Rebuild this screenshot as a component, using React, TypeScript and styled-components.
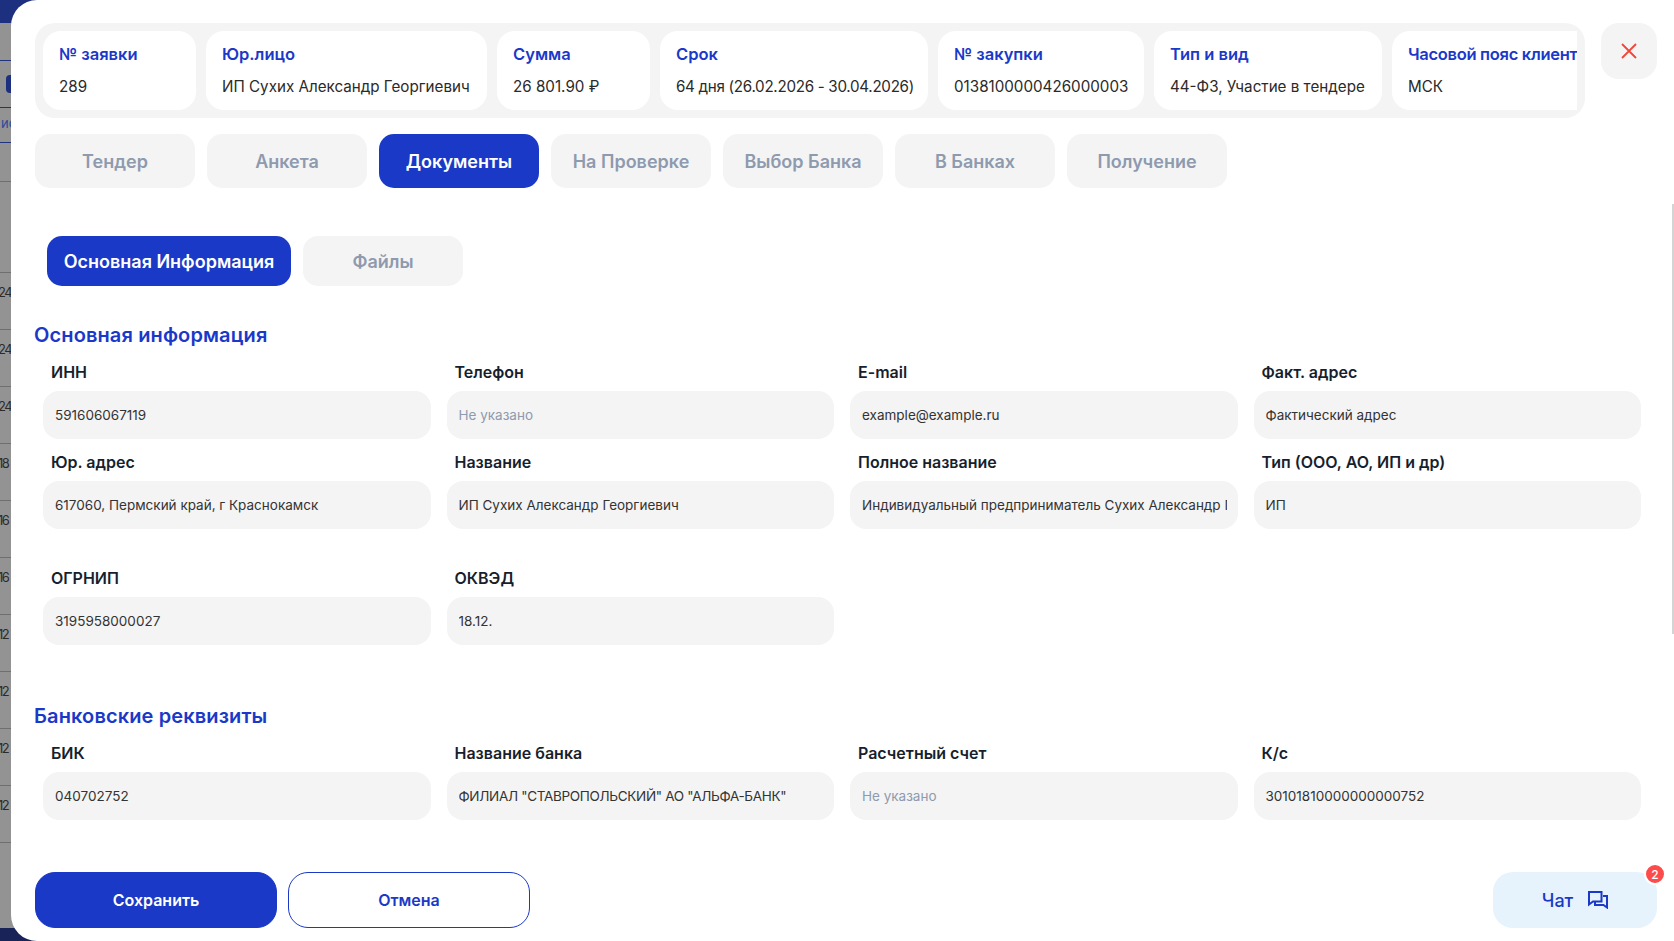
import React from "react";
import styled, { createGlobalStyle } from "styled-components";

const Global = createGlobalStyle`
  html, body { margin: 0; padding: 0; height: 100%; overflow: hidden; }
  body { font-family: Inter, "Noto Sans", "Liberation Sans", sans-serif; background: #8a8a8a; }
  * { box-sizing: border-box; }
`;

const Backdrop = styled.div`
  height: 941px;
  overflow: hidden;
  display: flex;
  flex-direction: column;
  background: linear-gradient(90deg, #939393, #7c7c7c);
  color: #222;
`;
const BackTop = styled.div`
  height: 23px;
  flex: none;
  background: #1d2f7f;
`;
const BackHead = styled.div`
  height: 38px;
  flex: none;
  border-bottom: 1px solid #20337f;
`;
const BackNav = styled.div`
  height: 47px;
  flex: none;
  border-bottom: 1px solid #20337f;
  display: flex;
  align-items: center;
`;
const BackMark = styled.span`
  display: block;
  width: 11px;
  height: 18px;
  margin-left: 6px;
  border-radius: 4px 0 0 4px;
  background: #1d2f7f;
`;
const BackSub = styled.div`
  height: 35px;
  flex: none;
  border-bottom: 1px solid #20337f;
  padding-left: 1px;
  font-size: 13px;
  line-height: 30px;
  color: #2b4a9c;
  white-space: nowrap;
`;
const BackGap = styled.div<{ $h: number }>`
  height: ${(p) => p.$h}px;
  flex: none;
  border-bottom: 1px solid #6f6f6f;
`;
const BackRow = styled.div`
  height: 57px;
  flex: none;
  border-bottom: 1px solid #6f6f6f;
  padding-bottom: 19px;
  display: flex;
  align-items: center;
`;
const BackNum = styled.span`
  margin-left: -2px;
  font-size: 13px;
  letter-spacing: -1.5px;
  color: #2b2b2b;
`;
const BackBottom = styled.div`
  flex: 1;
  background: #1a2358;
  margin-top: 85px;
`;

const Modal = styled.div`
  position: fixed;
  top: 0;
  left: 11px;
  right: 0;
  bottom: 0;
  background: #fff;
  border-radius: 26px 0 0 26px;
  padding: 23px 17px 13px 24px;
  display: flex;
  flex-direction: column;
  overflow: hidden;
`;
const ScrollThumb = styled.div`
  position: absolute;
  top: 204px;
  right: 0;
  width: 2px;
  height: 430px;
  background: #d4d4d4;
`;

const Header = styled.div`
  display: flex;
  gap: 16px;
  flex: none;
`;
const InfoStrip = styled.div`
  flex: 1;
  min-width: 0;
  height: 95px;
  padding: 8px;
  border-radius: 20px;
  background: #f4f4f4;
`;
const InfoScroll = styled.div`
  display: flex;
  gap: 10px;
  height: 79px;
  overflow: hidden;
`;
const InfoCard = styled.div<{ $w: number }>`
  flex: none;
  width: ${(p) => p.$w}px;
  background: #fff;
  border-radius: 18px;
  padding: 14px 16px;
  display: flex;
  flex-direction: column;
  gap: 14px;
`;
const InfoLabel = styled.div<{ $tight?: boolean }>`
  font-size: 16.5px;
  line-height: 18px;
  font-weight: 600;
  color: #1a39c9;
  white-space: nowrap;
  letter-spacing: ${(p) => (p.$tight ? "-0.3px" : "0")};
`;
const InfoValue = styled.div<{ $tight?: boolean }>`
  font-size: 15.2px;
  line-height: 20px;
  font-weight: 400;
  color: #2a2a2a;
  white-space: nowrap;
  letter-spacing: ${(p) => (p.$tight ? "-0.3px" : "0")};
`;
const CloseButton = styled.button`
  flex: none;
  width: 56px;
  height: 56px;
  border: 0;
  border-radius: 18px;
  background: #f4f4f4;
  display: flex;
  align-items: center;
  justify-content: center;
  padding: 0;
`;

const Tabs = styled.div<{ $mt: number; $ml?: number }>`
  display: flex;
  gap: 12px;
  flex: none;
  margin-top: ${(p) => p.$mt}px;
  margin-left: ${(p) => p.$ml ?? 0}px;
`;
const Tab = styled.button<{ $active?: boolean; $h: number; $w?: number }>`
  width: ${(p) => p.$w ?? 160}px;
  height: ${(p) => p.$h}px;
  padding: 0;
  border: 0;
  border-radius: 15px;
  background: ${(p) => (p.$active ? "#1a39c7" : "#f4f4f4")};
  color: ${(p) => (p.$active ? "#fff" : "#8e9aae")};
  font-family: inherit;
  font-size: 18px;
  font-weight: 600;
  white-space: nowrap;
`;

const SectionTitle = styled.h2<{ $mt: number }>`
  margin: ${(p) => p.$mt}px 0 14px -1px;
  height: 26px;
  font-size: 20px;
  line-height: 26px;
  font-weight: 600;
  letter-spacing: 0.12px;
  color: #1a39c9;
`;
const FieldRow = styled.div<{ $mt?: number }>`
  display: grid;
  grid-template-columns: repeat(4, 1fr);
  gap: 16px;
  margin: ${(p) => p.$mt ?? 0}px 16px 0 8px;
  flex: none;
`;
const Field = styled.label`
  display: flex;
  flex-direction: column;
  gap: 9px;
  min-width: 0;
`;
const FieldLabel = styled.span`
  padding-left: 8px;
  font-size: 16px;
  line-height: 20px;
  font-weight: 600;
  color: #171f2e;
  white-space: nowrap;
`;
const Input = styled.input<{ $tight?: boolean }>`
  width: 100%;
  height: 48px;
  border: 0;
  outline: 0;
  border-radius: 16px;
  background: #f4f4f4;
  padding: 0 11px 0 12px;
  font-family: inherit;
  font-size: 13.5px;
  letter-spacing: ${(p) => (p.$tight ? "-0.31px" : "0")};
  color: #333;
  &::placeholder { color: #8e9aae; opacity: 1; }
`;

const Footer = styled.div`
  display: flex;
  align-items: center;
  margin-top: 52px;
  gap: 11px;
  flex: none;
`;
const ActionButton = styled.button<{ $primary?: boolean }>`
  width: 242px;
  height: 56px;
  border-radius: 20px;
  border: 1px solid #1a39c7;
  background: ${(p) => (p.$primary ? "#1a39c7" : "#fff")};
  color: ${(p) => (p.$primary ? "#fff" : "#1a39c7")};
  font-family: inherit;
  font-size: 16px;
  font-weight: 600;
`;
const ChatButton = styled.button`
  position: relative;
  margin-left: auto;
  width: 164px;
  height: 56px;
  border: 0;
  border-radius: 20px;
  background: #e6f3fc;
  color: #1a39c7;
  font-family: inherit;
  font-size: 18px;
  font-weight: 500;
  display: flex;
  align-items: center;
  justify-content: center;
  gap: 15px;
`;
const Badge = styled.span`
  position: absolute;
  top: -9px;
  right: -9px;
  width: 22px;
  height: 22px;
  border-radius: 50%;
  border: 2px solid #fff;
  background: #fd4b4b;
  color: #fff;
  font-size: 12px;
  font-weight: 500;
  display: flex;
  align-items: center;
  justify-content: center;
`;

const info: [string, string, number][] = [
  ["№ заявки", "289", 153],
  ["Юр.лицо", "ИП Сухих Александр Георгиевич", 281],
  ["Сумма", "26 801.90 ₽", 153],
  ["Срок", "64 дня (26.02.2026 - 30.04.2026)", 268],
  ["№ закупки", "0138100000426000003", 206],
  ["Тип и вид", "44-ФЗ, Участие в тендере", 228],
  ["Часовой пояс клиента", "МСК", 240],
];
const tabs = ["Тендер", "Анкета", "Документы", "На Проверке", "Выбор Банка", "В Банках", "Получение"];
const nums = ["24", "24", "24", "18", "16", "16", "12", "12", "12", "12"];

type F = [string, string];
const rowA: F[] = [["ИНН", "591606067119"], ["Телефон", ""], ["E-mail", "example@example.ru"], ["Факт. адрес", "Фактический адрес"]];
const rowB: F[] = [
  ["Юр. адрес", "617060, Пермский край, г Краснокамск"],
  ["Название", "ИП Сухих Александр Георгиевич"],
  ["Полное название", "Индивидуальный предприниматель Сухих Александр Георгиевич"],
  ["Тип (ООО, АО, ИП и др)", "ИП"],
];
const rowC: F[] = [["ОГРНИП", "3195958000027"], ["ОКВЭД", "18.12."]];
const rowD: F[] = [
  ["БИК", "040702752"],
  ["Название банка", 'ФИЛИАЛ "СТАВРОПОЛЬСКИЙ" АО "АЛЬФА-БАНК"'],
  ["Расчетный счет", ""],
  ["К/с", "30101810000000000752"],
];

const Fields = ({ items, mt }: { items: F[]; mt?: number }) => (
  <FieldRow $mt={mt}>
    {items.map(([l, v]) => (
      <Field key={l}>
        <FieldLabel>{l}</FieldLabel>
        <Input readOnly value={v} placeholder="Не указано" $tight={l === "Название банка"} />
      </Field>
    ))}
  </FieldRow>
);

export default function App() {
  return (
    <>
      <Global />
      <Backdrop>
        <BackTop />
        <BackHead />
        <BackNav><BackMark /></BackNav>
        <BackSub>ис</BackSub>
        <BackGap $h={39} />
        <BackGap $h={91} />
        {nums.map((n, i) => (
          <BackRow key={i}><BackNum>{n}</BackNum></BackRow>
        ))}
        <BackBottom />
      </Backdrop>
      <Modal>
        <ScrollThumb />
        <Header>
          <InfoStrip>
            <InfoScroll>
              {info.map(([l, v, w]) => (
                <InfoCard key={l} $w={w}>
                  <InfoLabel $tight={l.startsWith("Часовой")}>{l}</InfoLabel>
                  <InfoValue $tight={l === "Срок"}>{v}</InfoValue>
                </InfoCard>
              ))}
            </InfoScroll>
          </InfoStrip>
          <CloseButton aria-label="Закрыть">
            <svg width="16" height="16" viewBox="0 0 16 16" fill="none">
              <path d="M1 1l14 14M15 1L1 15" stroke="#f2463a" strokeWidth="1.8" />
            </svg>
          </CloseButton>
        </Header>
        <Tabs $mt={16}>
          {tabs.map((t) => (
            <Tab key={t} $h={54} $active={t === "Документы"}>{t}</Tab>
          ))}
        </Tabs>
        <Tabs $mt={48} $ml={12}>
          <Tab $h={50} $w={244} $active>Основная Информация</Tab>
          <Tab $h={50}>Файлы</Tab>
        </Tabs>
        <SectionTitle $mt={36}>Основная информация</SectionTitle>
        <Fields items={rowA} />
        <Fields items={rowB} mt={13} />
        <Fields items={rowC} mt={39} />
        <SectionTitle $mt={58}>Банковские реквизиты</SectionTitle>
        <Fields items={rowD} />
        <Footer>
          <ActionButton $primary>Сохранить</ActionButton>
          <ActionButton>Отмена</ActionButton>
          <ChatButton>
            Чат
            <svg width="20" height="18" viewBox="0 0 20 18" fill="none" stroke="#1a39c7" strokeWidth="2">
              <path d="M1 1h12.5v9.5H5L1 13.5z" />
              <path d="M15 5h4v11.5L15.5 14H7v-3.5" />
            </svg>
            <Badge>2</Badge>
          </ChatButton>
        </Footer>
      </Modal>
    </>
  );
}
